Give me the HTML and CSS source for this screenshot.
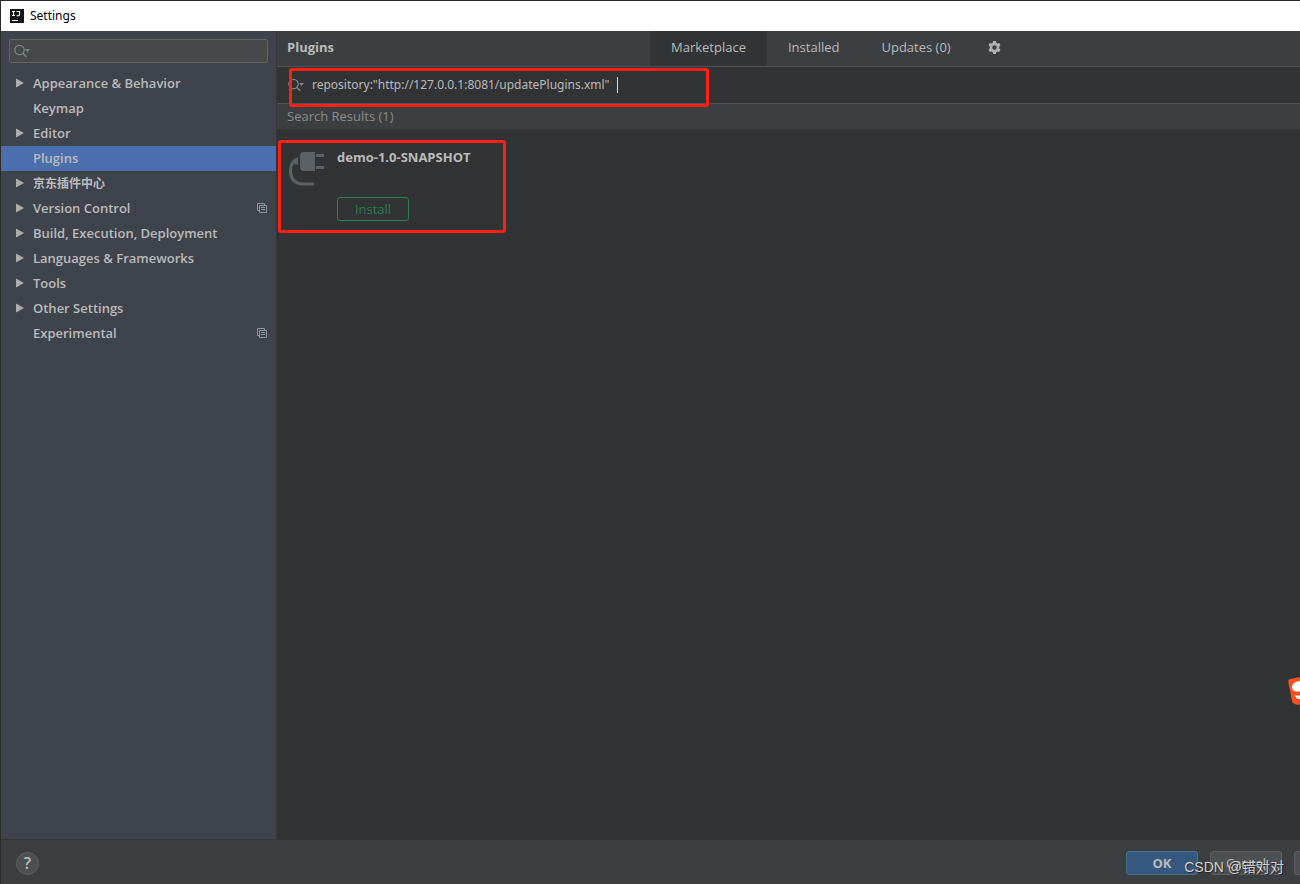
FILE: index.html
```html
<!DOCTYPE html>
<html lang="en">
<head>
<meta charset="utf-8">
<title>Settings</title>
<link rel="stylesheet" href="styles.css">
</head>
<body>
<svg class="defs" aria-hidden="true">
  <symbol id="search" viewBox="0 0 18 14">
    <circle cx="5.500" cy="6" r="4.7" fill="none" stroke="currentColor" stroke-width="1.2"/>
    <path d="M8.8 9.3l3.4 3.4" stroke="currentColor" stroke-width="1.6"/>
    <path d="M11 5h5l-2.500 3z" fill="currentColor"/>
  </symbol>
  <symbol id="copy" viewBox="0 0 10 10">
    <path d="M2.5 7.5h-2v-7h7v2M2.5 2.5h7v7h-7zM4 4.5h4M4 6.5h4" fill="none" stroke="currentColor"/>
  </symbol>
  <symbol id="arrow" viewBox="0 0 8 10"><path d="M0 .5l8 4.5-8 4.5z" fill="currentColor"/></symbol>
</svg>
<div class="window">
  <header class="titlebar">
    <svg class="logo" viewBox="0 0 14 14" aria-hidden="true"><rect width="14" height="14" fill="#151515"/><path d="M2 2.500h3M3.500 2.500v4M2 6.500h3M6.500 2.500h3v3q0 1.300-1.500 1.300H6.500M2 11.500h6" fill="none" stroke="#fff" stroke-width="1.100"/></svg>
    <span>Settings</span>
  </header>
  <div class="body">
    <aside class="sidebar">
      <label class="filter"><svg class="search-icon" aria-hidden="true"><use href="#search"/></svg><input class="filter-input" type="text" aria-label="Search settings"></label>
      <nav class="tree">
        <a class="node" href="#"><svg class="arrow"><use href="#arrow"/></svg><span class="name">Appearance &amp; Behavior</span></a>
        <a class="node" href="#"><span class="arrow"></span><span class="name">Keymap</span></a>
        <a class="node" href="#"><svg class="arrow"><use href="#arrow"/></svg><span class="name">Editor</span></a>
        <a class="node selected" href="#"><span class="arrow"></span><span class="name">Plugins</span></a>
        <a class="node" href="#"><svg class="arrow"><use href="#arrow"/></svg><span class="name cjk" lang="zh">京东插件中心</span></a>
        <a class="node" href="#"><svg class="arrow"><use href="#arrow"/></svg><span class="name">Version Control</span><svg class="copy"><use href="#copy"/></svg></a>
        <a class="node" href="#"><svg class="arrow"><use href="#arrow"/></svg><span class="name">Build, Execution, Deployment</span></a>
        <a class="node" href="#"><svg class="arrow"><use href="#arrow"/></svg><span class="name">Languages &amp; Frameworks</span></a>
        <a class="node" href="#"><svg class="arrow"><use href="#arrow"/></svg><span class="name">Tools</span></a>
        <a class="node" href="#"><svg class="arrow"><use href="#arrow"/></svg><span class="name">Other Settings</span></a>
        <a class="node" href="#"><span class="arrow"></span><span class="name">Experimental</span><svg class="copy"><use href="#copy"/></svg></a>
      </nav>
    </aside>
    <main class="main">
      <div class="header">
        <h1 class="heading">Plugins</h1>
        <div class="tabs">
          <button class="tab active">Marketplace</button>
          <button class="tab">Installed</button>
          <button class="tab">Updates (0)</button>
          <button class="gear" aria-label="Plugin options"><svg viewBox="0 0 12 12" width="13" height="13"><path d="M4.800 0h2.400l.4 1.700 1 .6 1.700-.5 1.200 2.100L10.300 5.200v1.600l1.200 1.300-1.200 2.100-1.700-.5-1 .6-.4 1.700H4.800l-.4-1.700-1-.6-1.700.5L.5 8.100l1.200-1.300V5.200L.5 3.900l1.200-2.100 1.700.5 1-.6zM6 3.900a2.100 2.100 0 1 0 0 4.200 2.100 2.100 0 0 0 0-4.200z" fill="#b0b3b5" fill-rule="evenodd"/></svg></button>
        </div>
      </div>
      <div class="query">
        <svg class="search-icon" aria-hidden="true"><use href="#search"/></svg>
        <input class="query-input" type="text" aria-label="Search plugins" value='repository:"http://127.0.0.1:8081/updatePlugins.xml"'>
        <span class="caret"></span>
        <span class="mark mark-query"></span>
      </div>
      <h2 class="results">Search Results (1)</h2>
      <section class="list">
        <article class="plugin">
          <svg class="plug" viewBox="0 0 36 36" aria-hidden="true"><path d="M15 1h11v19H15q-4 0-4-4V5q0-4 4-4zM27 3h8v3h-8zM27 15h8v3h-8z" fill="#5b6265"/><path d="M9 6v8L5 13q-2 3-2 6C3 27 7 31 14 31.500H25v3H14C5 34.500 0 29 0 20 0 13 3 8 9 6z" fill="#5b6265"/></svg>
          <div class="info">
            <h3 class="plugin-name">demo-1.0-SNAPSHOT</h3>
            <button class="install">Install</button>
          </div>
          <span class="mark mark-plugin"></span>
        </article>
      </section>
    </main>
  </div>
  <footer class="footer">
    <button class="help" aria-label="Help">?</button>
    <div class="actions">
      <button class="btn primary">OK</button>
      <button class="btn">Cancel</button>
      <button class="btn" aria-label="Apply"></button>
    </div>
  </footer>
  <svg class="ime" viewBox="0 0 12 28" aria-hidden="true"><path d="M12 0L2 2Q0 2.500.3 5L4 24q.6 3 3 3.300L12 28z" fill="#f4511e"/><path d="M12 4Q4 5 4 10q0 4 4 4.500h4zM7 18q2 1 5 .5v3.500q-4 .5-5-4z" fill="#fff"/></svg>
  <span class="watermark" lang="zh">CSDN @错对对</span>
</div>
</body>
</html>
```
FILE: styles.css
```css
* { box-sizing: border-box; }
body {
  margin: 0;
  font: 13px/18px "Open Sans", "Noto Sans CJK SC", sans-serif;
  color: #bbb;
  background: #3c3f41;
}
button, input { font: inherit; color: inherit; margin: 0; padding: 0; border: 0; background: none; }
h1, h2, h3 { margin: 0; font-size: 13px; line-height: 18px; }
svg { display: block; flex: none; }
.defs { position: absolute; width: 0; height: 0; }
.window {
  position: relative;
  display: flex;
  flex-direction: column;
  min-height: 100vh;
  overflow: hidden;
  border-top: 1px solid #2b2b2b;
  border-left: 1px solid #2b2b2b;
}
.titlebar {
  display: flex;
  align-items: center;
  gap: 6px;
  height: 30px;
  padding-left: 9px;
  background: #fff;
  color: #000;
  font-family: "Noto Sans", sans-serif;
  font-size: 12px;
}
.logo { width: 14px; height: 14px; }
.body { display: flex; flex: 1; }
.sidebar {
  width: 276px;
  flex: none;
  padding-top: 8px;
  background: #3f434c;
  border-right: 1px solid #35373b;
}
.filter {
  display: flex;
  align-items: center;
  height: 24px;
  margin: 0 8px 8px;
  padding-left: 4px;
  background: #45494a;
  border: 1px solid #646464;
  border-radius: 2px;
}
.search-icon { width: 18px; height: 14px; color: #7d8588; }
.filter-input { flex: 1; min-width: 0; outline: 0; }
.node {
  display: flex;
  align-items: center;
  height: 25px;
  padding: 0 9px 2px 15px;
  color: #bbb;
  font-weight: 600;
  text-decoration: none;
}
.selected { background: #4b6eaf; }
.arrow { width: 8px; height: 10px; margin-right: 9px; color: #adadad; }
.name { flex: 1; }
.cjk { font-family: "Noto Sans CJK SC", sans-serif; font-size: 12px; font-weight: bold; }
.copy { width: 10px; height: 10px; color: #8b979e; }
.main { flex: 1; min-width: 0; display: flex; flex-direction: column; background: #313335; }
.header {
  display: flex;
  height: 36px;
  align-items: center;
  padding-left: 10px;
  background: #3c3f41;
  border-bottom: 1px solid #515151;
}
.heading { flex: 1 0 0; padding-bottom: 3px; }
.tabs { display: flex; align-self: stretch; flex: 0 0 650px; }
.tab { padding: 0 21px 3px; }
.active { background: #313335; }
.gear { display: flex; align-items: center; padding: 0 16px 2px; }
.query {
  position: relative;
  display: flex;
  align-items: center;
  height: 37px;
  padding-left: 11px;
  border-bottom: 1px solid #515151;
}
.query-input {
  width: 303px;
  margin-left: 6px;
  padding-bottom: 1px;
  outline: 0;
  font-family: "Noto Sans", sans-serif;
  font-size: 12px;
}
.caret { width: 1px; height: 16px; margin-left: 2px; background: #ddd; }
.mark { position: absolute; border: 3px solid #ff2012; border-radius: 3px; pointer-events: none; }
.mark-query { left: 12px; top: 1px; width: 420px; height: 39px; }
.results { height: 25px; padding: 3px 10px; background: #3c3f41; color: #8c8c8c; font-weight: normal; }
.list { flex: 1; padding-top: 11px; }
.plugin {
  position: relative;
  display: flex;
  gap: 12px;
  width: 229px;
  height: 93px;
  padding: 8px 12px;
}
.mark-plugin { inset: 0 0 0 1px; }
.plug { width: 36px; height: 36px; margin-top: 3px; }
.install {
  width: 72px;
  height: 24px;
  margin-top: 31px;
  border: 1px solid #2c7d4f;
  border-radius: 3px;
  color: #2c7d4f;
}
.footer {
  display: flex;
  align-items: center;
  justify-content: space-between;
  height: 45px;
  padding: 2px 0 0 15px;
  background: #3c3f41;
  border-top: 1px solid #333537;
}
.help {
  width: 23px;
  height: 23px;
  border: 1px solid #5e6060;
  border-radius: 50%;
  background: #4c5052;
  font-size: 16px;
  font-weight: 600;
  line-height: 20px;
}
.actions { display: flex; gap: 12px; margin-right: -66px; }
.btn { width: 72px; height: 24px; border: 1px solid #5e6060; border-radius: 3px; background: #4c5052; }
.primary { background: #365880; border-color: #4c708c; font-weight: bold; }
.ime { position: absolute; right: 0; top: 676px; width: 12px; height: 28px; }
.watermark {
  position: absolute;
  right: 16px;
  bottom: 7px;
  font: 14px/20px "Liberation Sans", "Noto Sans CJK SC", sans-serif;
  color: #d0d1d1;
  text-shadow: 1px 1px 1px #222;
}
```
